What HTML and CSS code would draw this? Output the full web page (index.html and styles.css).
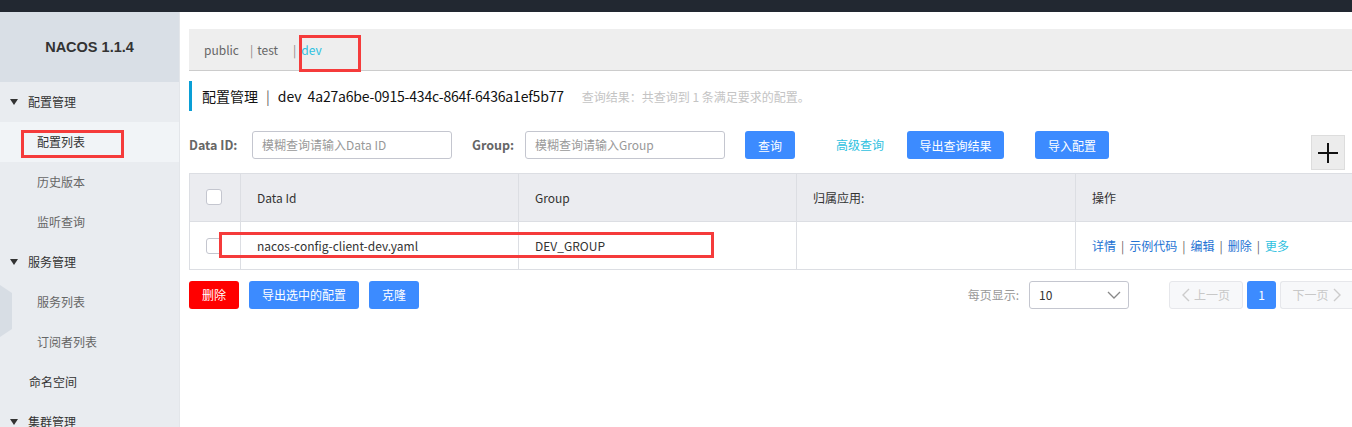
FILE: index.html
```html
<!DOCTYPE html>
<html lang="zh-CN">
<head>
<meta charset="utf-8">
<title>Nacos</title>
<link rel="stylesheet" href="styles.css">
</head>
<body>
<div class="topbar"></div>
<div class="layout">
  <aside class="sidebar">
    <div class="logo">NACOS 1.1.4</div>
    <ul class="menu">
      <li class="group"><span class="tri"></span>配置管理</li>
      <li class="item active">配置列表</li>
      <li class="item">历史版本</li>
      <li class="item">监听查询</li>
      <li class="group"><span class="tri"></span>服务管理</li>
      <li class="item">服务列表</li>
      <li class="item">订阅者列表</li>
      <li class="group plain">命名空间</li>
      <li class="group"><span class="tri"></span>集群管理</li>
    </ul>
    <svg class="toggle" width="13" height="52" viewBox="0 0 13 52"><polygon points="0,0 12,8 12,44 0,52" fill="#d7dde4"/></svg>
    <div class="mark mark-menu"></div>
  </aside>
  <main class="main">
    <div class="nsbar">
      <span class="ns">public</span>
      <span class="ns"><span class="sep">|</span>test</span>
      <span class="ns cur"><span class="sep">|</span>dev</span>
    </div>
    <div class="title">
      <span class="t-main">配置管理</span><span class="t-sep">|</span><span class="t-ns">dev</span><span class="t-id">4a27a6be-0915-434c-864f-6436a1ef5b77</span>
      <span class="t-info">查询结果：共查询到 1 条满足要求的配置。</span>
    </div>
    <div class="search">
      <label class="lbl">Data ID:</label>
      <div class="input"><span class="ph">模糊查询请输入Data ID</span></div>
      <label class="lbl lbl2">Group:</label>
      <div class="input"><span class="ph">模糊查询请输入Group</span></div>
      <button class="btn b-query">查询</button>
      <a class="adv">高级查询</a>
      <button class="btn b-export">导出查询结果</button>
      <button class="btn b-import">导入配置</button>
      <div class="plus"><svg width="22" height="22" viewBox="0 0 22 22"><path d="M11 1v20M1 11h20" stroke="#111" stroke-width="2"/></svg></div>
    </div>
    <div class="table">
      <div class="tr thead">
        <div class="td c0"><span class="cb"></span></div>
        <div class="td c1">Data Id</div>
        <div class="td c2">Group</div>
        <div class="td c3">归属应用:</div>
        <div class="td c4">操作</div>
      </div>
      <div class="tr">
        <div class="td c0"><span class="cb"></span></div>
        <div class="td c1">nacos-config-client-dev.yaml</div>
        <div class="td c2">DEV_GROUP</div>
        <div class="td c3"></div>
        <div class="td c4 ops"><a>详情</a><i>|</i><a>示例代码</a><i>|</i><a>编辑</a><i>|</i><a>删除</a><i>|</i><a class="more">更多</a></div>
      </div>
    </div>
    <div class="footer">
      <button class="btn b-del">删除</button>
      <button class="btn b-expsel">导出选中的配置</button>
      <button class="btn b-clone">克隆</button>
      <div class="spacer"></div>
      <span class="ps">每页显示:</span>
      <div class="select"><span>10</span><svg width="14" height="8" viewBox="0 0 14 8"><path d="M1 1l6 6 6-6" fill="none" stroke="#888" stroke-width="1.3"/></svg></div>
      <div class="pager">
        <span class="pg dis prev"><svg width="8" height="14" viewBox="0 0 8 14"><path d="M7 1L1 7l6 6" fill="none" stroke="#ccc" stroke-width="1.4"/></svg>上一页</span>
        <span class="pg on">1</span>
        <span class="pg dis next">下一页<svg width="8" height="14" viewBox="0 0 8 14"><path d="M1 1l6 6-6 6" fill="none" stroke="#ccc" stroke-width="1.4"/></svg></span>
      </div>
    </div>
    <div class="mark mark-ns"></div>
    <div class="mark mark-row"></div>
  </main>
</div>
</body>
</html>
```
FILE: styles.css
```css
* { box-sizing: border-box; }
html, body { margin: 0; padding: 0; }
body {
  font-family: "Noto Sans CJK SC", "Liberation Sans", sans-serif;
  font-size: 12px;
  color: #333;
  width: 1352px;
  height: 427px;
  overflow: hidden;
  background: #fff;
}
.topbar { height: 12px; background: #222831; }
.layout { display: flex; height: 415px; }
.sidebar {
  position: relative;
  width: 180px;
  flex: none;
  background: #e9ecf0;
  border-right: 1px solid #e3e6ea;
}
.logo {
  height: 70px;
  background: #d9dfe6;
  display: flex;
  align-items: center;
  justify-content: center;
  font-family: "Liberation Sans", sans-serif;
  font-weight: bold;
  font-size: 14.5px;
  color: #333;
  padding-bottom: 1px;
}
.menu { list-style: none; margin: 0; padding: 0; }
.menu li {
  height: 40px;
  display: flex;
  align-items: center;
  line-height: 40px;
}
.menu .group { padding-left: 10px; color: #333; }
.menu .group.plain { padding-left: 29px; }
.menu .tri {
  width: 0; height: 0;
  border-left: 4.5px solid transparent;
  border-right: 4.5px solid transparent;
  border-top: 6px solid #333;
  margin-right: 10px;
  margin-top: -1px;
}
.menu .item { padding-left: 37px; color: #666; }
.menu .item.active { background: #f1f4f7; color: #333; }
.toggle { position: absolute; left: 0; top: 273px; }
.mark { position: absolute; border: 3px solid #f53b3b; pointer-events: none; }
.mark-menu { left: 21px; top: 118px; width: 103px; height: 28px; }

.main {
  position: relative;
  flex: 1;
  padding: 17px 0 0 9px;
  overflow: hidden;
}
.nsbar {
  height: 42px;
  background: #eeeeee;
  border-bottom: 1px solid #cccccc;
  display: flex;
  align-items: center;
  padding-left: 15px;
  color: #666;
  font-size: 12px;
}
.ns { margin-right: 11px; }
.ns .sep { margin-right: 4px; color: #888; }
.ns.cur { color: #2fc1e0; margin-left: 4px; }
.ns.cur .sep { color: #888; margin-right: 5px; }

.title {
  margin-top: 10px;
  height: 30px;
  border-left: 3px solid #0a9fd6;
  display: flex;
  align-items: center;
  padding-left: 10px;
  font-size: 14px;
  color: #111;
}
.t-sep { margin: 0 8px 0 8px; color: #666; }
.t-ns { margin-right: 6px; }
.t-id { letter-spacing: -0.18px; }
.t-info { margin-left: 18px; font-size: 12px; color: #c4c4c4; }

.search {
  margin-top: 20px;
  display: flex;
  align-items: flex-start;
  height: 40px;
}
.lbl {
  font-weight: bold;
  color: #666;
  font-size: 12.5px;
  line-height: 28px;
  width: 63px;
}
.lbl2 { width: 53px; margin-left: 20px; }
.input {
  width: 200px;
  height: 28px;
  border: 1px solid #c4c6cf;
  border-radius: 3px;
  padding-left: 9px;
  line-height: 26px;
}
.ph { color: #999; }
.btn {
  font-family: inherit;
  font-size: 12px;
  height: 28px;
  border: none;
  border-radius: 3px;
  background: #3c8bff;
  color: #fff;
  padding: 0;
  cursor: pointer;
}
.b-query { width: 50px; margin-left: 20px; }
.adv { color: #2fc1e0; margin-left: 41px; line-height: 28px; width: 48px; }
.b-export { width: 97px; margin-left: 23px; }
.b-import { width: 74px; margin-left: 31px; }
.plus {
  margin-left: auto;
  margin-right: 7px;
  margin-top: 4px;
  width: 34px;
  height: 35px;
  background: #ececec;
  border: 1px solid #dddddd;
  display: flex;
  align-items: center;
  justify-content: center;
}

.table {
  margin-top: 2px;
  width: 1165px;
  border-top: 1px solid #dcdee3;
}
.tr { display: flex; height: 48px; border-bottom: 1px solid #dcdee3; border-left: 1px solid #dcdee3; }
.thead { background: #ebecf0; }
.thead .td { padding-bottom: 1px; }
.td {
  display: flex;
  align-items: center;
  padding-left: 16px;
  border-right: 1px solid #dcdee3;
  color: #333;
  flex: none;
}
.c0 { width: 51px; padding-left: 16px; }
.c1, .c2 { width: 278px; }
.c3 { width: 279px; }
.c4 { width: 278px; }
.cb {
  width: 16px;
  height: 16px;
  border: 1px solid #c4c6cf;
  border-radius: 3px;
  background: #fff;
}
.ops a { color: #2473d3; }
.ops a.more { color: #2fc1e0; }
.ops i { font-style: normal; color: #666; margin: 0 5px; }

.footer {
  margin-top: 10px;
  display: flex;
  align-items: center;
  height: 29px;
}
.b-del { width: 50px; background: #ff0000; }
.b-expsel { width: 110px; margin-left: 10px; }
.b-clone { width: 50px; margin-left: 10px; }
.spacer { flex: 1; }
.ps { color: #999; margin-right: 10px; }
.select {
  width: 100px;
  height: 28px;
  border: 1px solid #c4c6cf;
  border-radius: 3px;
  display: flex;
  align-items: center;
  justify-content: space-between;
  padding: 0 7px 0 9px;
  color: #333;
}
.pager { display: flex; margin-left: 40px; gap: 4px; }
.pg {
  height: 28px;
  display: flex;
  align-items: center;
  justify-content: center;
  border-radius: 3px;
  gap: 4px;
}
.pg.dis { background: #f7f8fa; border: 1px solid #e6e7eb; color: #c8c8c8; }
.prev { width: 74px; }
.next { width: 72px; border-right: none !important; border-radius: 3px 0 0 3px; }
.pg.on { width: 29px; background: #3c8bff; color: #fff; }

.mark-ns { left: 119px; top: 23px; width: 62px; height: 37px; }
.mark-row { left: 39px; top: 220px; width: 495px; height: 26px; }
```
